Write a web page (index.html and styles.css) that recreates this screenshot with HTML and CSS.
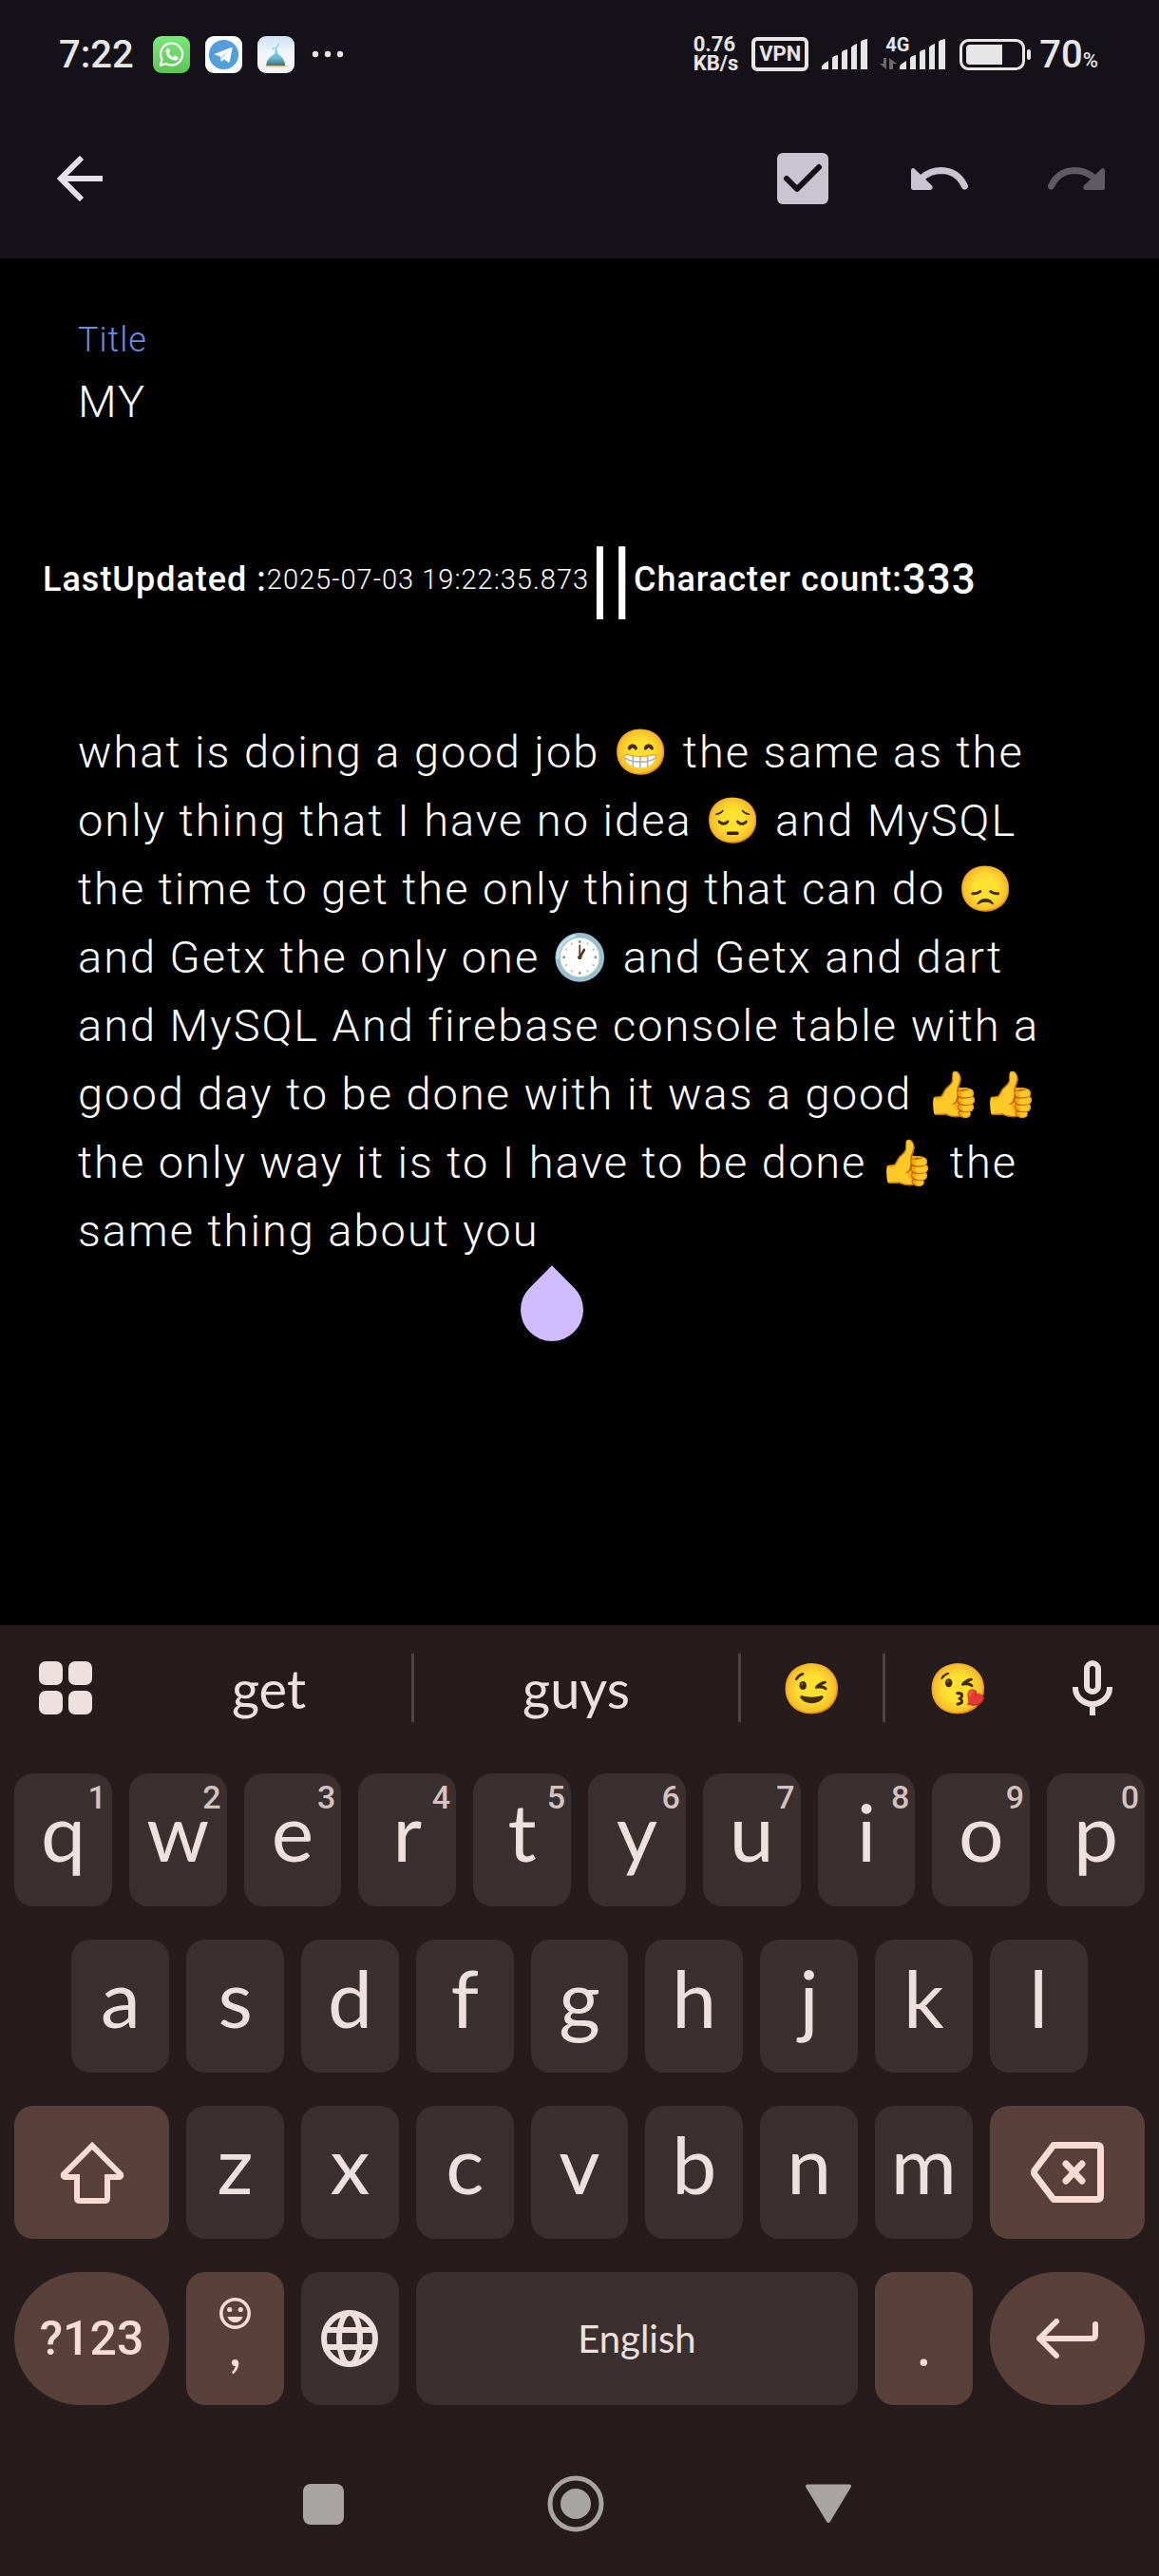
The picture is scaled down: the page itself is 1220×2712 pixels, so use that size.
FILE: index.html
```html
<!DOCTYPE html>
<html lang="en">
<head>
<meta charset="utf-8">
<meta name="viewport" content="width=device-width, initial-scale=1">
<title>Edit note</title>
<link rel="stylesheet" href="styles.css">
</head>
<body>
<div class="screen">
  <header class="top">
    <div class="status">
      <div class="status-group status-left">
        <span class="clock">7:22</span>
        <svg class="app-icon" viewBox="0 0 39 39" aria-label="WhatsApp">
          <defs><linearGradient id="wa" x1="0" y1="0" x2="0" y2="1"><stop offset="0" stop-color="#7ce878"/><stop offset="1" stop-color="#5cc455"/></linearGradient></defs>
          <rect width="39" height="39" rx="9" fill="url(#wa)"/>
          <path d="M7.800 30.800l1.700-6.200a11.500 11.500 0 1 1 4.500 4.500z" fill="none" stroke="#fff" stroke-width="2.200" stroke-linejoin="round"/>
          <path d="M14.800 13.200c.6-.6 1.600-.6 2 .2l1 2.300c.2.500.1.900-.2 1.300l-.9 1.100c1.100 2 2.600 3.300 4.600 4.200l1.200-1.300c.3-.4.700-.5 1.200-.3l2.300 1.100c.6.300.8.800.6 1.500-.5 1.800-2.100 2.500-3.600 2.300-4.900-.7-8.700-4.500-9.400-8.200-.3-1.700.2-3.200 1.200-4.200z" fill="#fff"/>
        </svg>
        <svg class="app-icon" viewBox="0 0 39 39" aria-label="Telegram">
          <rect width="39" height="39" rx="9" fill="#fff"/>
          <circle cx="19.500" cy="19.500" r="15.600" fill="#529fd9"/>
          <path d="M8.800 19.200L27.200 12c.9-.3 1.600.2 1.300 1.500l-2.700 13.200c-.2 1-.8 1.300-1.600.8l-4.300-3.200-2.300 2.200c-.5.500-.9.300-1-.3l-.9-4.700-4.400-1.400c-.9-.3-.9-.7-.5-.9z" fill="#fff"/>
          <path d="M16.400 21.700l8.100-6-6.400 6.900-.5 3.300z" fill="#a9cfeb"/>
        </svg>
        <svg class="app-icon" viewBox="0 0 39 39" aria-label="Prayer times">
          <defs>
            <linearGradient id="sky" x1="0" y1="0" x2="0" y2="1"><stop offset="0" stop-color="#cfe3f5"/><stop offset=".5" stop-color="#f3f6fb"/><stop offset="1" stop-color="#f3f4fa"/></linearGradient>
            <linearGradient id="dome" x1="0" y1="0" x2="0" y2="1"><stop offset="0" stop-color="#6cd2ee"/><stop offset=".55" stop-color="#6bbcd2"/><stop offset="1" stop-color="#3d727c"/></linearGradient>
          </defs>
          <rect width="39" height="39" rx="9" fill="url(#sky)"/>
          <path d="M22 7.500a5 5 0 0 1-6.500 5.300" fill="none" stroke="#8ad6f1" stroke-width="1.500"/>
          <path d="M19.200 13h1l.8 5c1 2 8 4.500 8.200 13H9.200c.2-8.500 8.200-11 9.200-13z" fill="url(#dome)"/>
          <path d="M9 31.800h21" stroke="#f0c25a" stroke-width="1.600"/>
        </svg>
        <svg class="more-dots" viewBox="0 0 34 8" aria-hidden="true"><circle cx="4" cy="4" r="3.200"/><circle cx="17" cy="4" r="3.200"/><circle cx="30" cy="4" r="3.200"/></svg>
      </div>
      <div class="status-group status-right">
        <span class="speed"><span>0.76</span><span>KB/s</span></span>
        <span class="vpn">VPN</span>
        <svg class="signal" viewBox="0 0 49 32" aria-hidden="true"><path d="M0 32v-3q0-2 7-6v9zM11 32V20q1-2 6-3v15zM21 32V14q1-2 6-3v21zM31 32V9q1-2 6-4v27zM41 32V3q1-2 7-3v32z"/></svg>
        <span class="mobile">
          <span class="net">4G</span>
          <svg class="arrows" viewBox="0 0 18 12" aria-hidden="true"><path d="M4 0h3v12L0 6h4zM10 12V0l8 6h-4v6z"/></svg>
          <svg class="signal" viewBox="0 0 49 32" aria-hidden="true"><path d="M0 32v-3q0-2 7-6v9zM11 32V20q1-2 6-3v15zM21 32V14q1-2 6-3v21zM31 32V9q1-2 6-4v27zM41 32V3q1-2 7-3v32z"/></svg>
        </span>
        <svg class="battery" viewBox="0 0 76 33" aria-hidden="true"><rect x="1.500" y="1.500" width="66" height="30" rx="8" fill="none" stroke="#e6e6e6" stroke-width="3"/><path d="M11 6h34v21H11q-4 0-4-4V10q0-4 4-4z"/><rect x="71" y="11" width="4" height="11" rx="2"/></svg>
        <span class="level">70<small>%</small></span>
      </div>
    </div>
    <nav class="appbar">
      <button class="tool" type="button" aria-label="Back"><svg width="48" height="48" viewBox="0 0 48 48"><path d="M26 2L4 24l22 22M4 24h44" fill="none" stroke="#e6e0e9" stroke-width="6"/></svg></button>
      <span class="spacer"></span>
      <button class="tool" type="button" aria-label="Done"><svg width="54" height="54" viewBox="0 0 54 54"><rect width="54" height="54" rx="6" fill="#cac4d0"/><path d="M10 27l11 11 23-23" fill="none" stroke="#141218" stroke-width="6" stroke-linecap="round" stroke-linejoin="round"/></svg></button>
      <button class="tool" type="button" aria-label="Undo"><svg width="60" height="24" viewBox="0 0 60 24"><path d="M0 2.500Q1 0 3.500 1.500L22 19.500q2 4-2 4.500H2.500Q0 24 0 21.500z" fill="#cac4d0"/><path d="M11 11.500Q20 3.500 32 3.500 49 4 56.500 20" fill="none" stroke="#cac4d0" stroke-width="7" stroke-linecap="round"/></svg></button>
      <button class="tool" type="button" aria-label="Redo" disabled><svg width="60" height="24" viewBox="0 0 60 24"><path d="M60 2.500Q59 0 56.500 1.500L38 19.500q-2 4 2 4.500h17.500q2.500 0 2.500-2.500z" fill="#5e5c62"/><path d="M49 11.500Q40 3.500 28 3.500 11 4 3.500 20" fill="none" stroke="#5e5c62" stroke-width="7" stroke-linecap="round"/></svg></button>
    </nav>
  </header>

  <main class="note">
    <div class="field">
      <label for="note-title">Title</label>
      <input id="note-title" type="text" value="MY">
    </div>
    <div class="meta">
      <span class="meta-label">LastUpdated :</span><span class="meta-date">2025-07-03 19:22:35.873</span><span class="meta-bars">||</span><span class="meta-label">Character count:</span><span class="meta-count">333</span>
    </div>
    <div class="body">
      <textarea id="note-body" rows="8" aria-label="Note" spellcheck="false">what is doing a good job 😁 the same as the only thing that I have no idea 😔 and MySQL the time to get the only thing that can do 😞 and Getx the only one 🕐 and Getx and dart and MySQL And firebase console table with a good day to be done with it was a good 👍👍 the only way it is to I have to be done 👍 the same thing about you</textarea>
      <span class="caret-handle"></span>
    </div>
  </main>

  <section class="keyboard" aria-label="Keyboard">
    <div class="strip">
      <button type="button" aria-label="Keyboard menu"><svg width="56" height="56" viewBox="0 0 56 56" fill="#eee0de"><rect width="25" height="25" rx="7"/><rect x="31" width="25" height="25" rx="7"/><rect y="31" width="25" height="25" rx="7"/><rect x="31" y="31" width="25" height="25" rx="7"/></svg></button>
      <button type="button">get</button>
      <button type="button" class="split">guys</button>
      <button type="button" class="split emoji">😉</button>
      <button type="button" class="split emoji">😘</button>
      <button type="button" aria-label="Voice typing"><svg width="42" height="58" viewBox="0 0 42 58" fill="none" stroke="#eee0de" stroke-width="6"><rect x="15" y="3" width="12" height="30" rx="6"/><path d="M3 28v1a18 17 0 0 0 36 0v-1M21 46v12"/></svg></button>
    </div>
    <div class="keys">
      <button type="button" class="key">q<sup>1</sup></button>
      <button type="button" class="key">w<sup>2</sup></button>
      <button type="button" class="key">e<sup>3</sup></button>
      <button type="button" class="key">r<sup>4</sup></button>
      <button type="button" class="key">t<sup>5</sup></button>
      <button type="button" class="key">y<sup>6</sup></button>
      <button type="button" class="key">u<sup>7</sup></button>
      <button type="button" class="key">i<sup>8</sup></button>
      <button type="button" class="key">o<sup>9</sup></button>
      <button type="button" class="key">p<sup>0</sup></button>

      <button type="button" class="key home">a</button>
      <button type="button" class="key">s</button>
      <button type="button" class="key">d</button>
      <button type="button" class="key">f</button>
      <button type="button" class="key">g</button>
      <button type="button" class="key">h</button>
      <button type="button" class="key">j</button>
      <button type="button" class="key">k</button>
      <button type="button" class="key">l</button>

      <button type="button" class="key wide accent first" aria-label="Shift"><svg width="68" height="66" viewBox="0 0 68 66" fill="none" stroke="#fadcd5" stroke-width="6"><path d="M34 5L4 35q-1 3 2 3h12v22q0 3 3 3h26q3 0 3-3V38h12q3 0 2-3z"/></svg></button>
      <button type="button" class="key">z</button>
      <button type="button" class="key">x</button>
      <button type="button" class="key">c</button>
      <button type="button" class="key">v</button>
      <button type="button" class="key">b</button>
      <button type="button" class="key">n</button>
      <button type="button" class="key">m</button>
      <button type="button" class="key wide accent" aria-label="Backspace"><svg width="77" height="64" viewBox="0 0 77 64" fill="none" stroke="#fadcd5" stroke-width="7" stroke-linecap="round" stroke-linejoin="round"><path d="M24 3.500h46q3.500 0 3.500 3.500v50q0 3.500-3.500 3.500H24L4 34q-1-2 0-4zM37 23l17 18M54 23L37 41"/></svg></button>

      <button type="button" class="key wide accent round symbols">?123</button>
      <button type="button" class="key accent punct"><svg width="33" height="33" viewBox="0 0 33 33" aria-hidden="true"><circle cx="16.500" cy="16.500" r="14.700" fill="none" stroke="#fadcd5" stroke-width="3.500"/><circle cx="10.700" cy="12.500" r="2.600" fill="#fadcd5"/><circle cx="22.300" cy="12.500" r="2.600" fill="#fadcd5"/><path d="M8.500 20h16c-1 3.600-4 6-8 6s-7-2.400-8-6z" fill="#fadcd5"/></svg><span>,</span></button>
      <button type="button" class="key" aria-label="Switch language"><svg width="60" height="60" viewBox="0 0 60 60" fill="none" stroke="#eee0de" stroke-width="6"><circle cx="30" cy="30" r="27"/><ellipse cx="30" cy="30" rx="11" ry="27"/><path d="M5 21h50M5 39h50"/></svg></button>
      <button type="button" class="key space">English</button>
      <button type="button" class="key accent punct"><span>.</span></button>
      <button type="button" class="key wide accent round" aria-label="Enter"><svg width="65" height="42" viewBox="0 0 65 42" fill="none" stroke="#fadcd5" stroke-width="6" stroke-linecap="round" stroke-linejoin="round"><path d="M21 3L3 21l18 18M3 21h55q4 0 4-4V6"/></svg></button>
    </div>
  </section>

  <nav class="sysnav">
    <button type="button" aria-label="Recent apps"><svg width="43" height="43" viewBox="0 0 43 43"><rect width="43" height="43" rx="8" fill="#a8a4a3"/></svg></button>
    <button type="button" aria-label="Home"><svg width="60" height="60" viewBox="0 0 60 60"><circle cx="30" cy="30" r="27" fill="none" stroke="#a8a4a3" stroke-width="5"/><circle cx="30" cy="30" r="16" fill="#a8a4a3"/></svg></button>
    <button type="button" aria-label="Hide keyboard"><svg width="50" height="42" viewBox="0 0 50 42"><path d="M3 2.500h44L25 39z" fill="#a8a4a3" stroke="#a8a4a3" stroke-width="4" stroke-linejoin="round"/></svg></button>
  </nav>
</div>
</body>
</html>
```
FILE: styles.css
```css
* { box-sizing: border-box; }

body {
  margin: 0;
  background: #000;
  color: #fff;
  font-family: Roboto, "Noto Color Emoji", sans-serif;
}

button, input, textarea {
  margin: 0;
  padding: 0;
  border: 0;
  background: none;
  color: inherit;
  font: inherit;
}

svg { display: block; flex: none; }

.screen {
  display: flex;
  flex-direction: column;
  min-height: 100vh;
}

/* Status bar and app bar */
.top { background: #141218; }

.status {
  display: flex;
  justify-content: space-between;
  align-items: center;
  height: 104px;
  padding: 10px 64px 0 62px;
  color: #e6e6e6;
  fill: #e6e6e6;
}

.status-group { display: flex; align-items: center; }
.status-left { gap: 16px; }
.status-right { gap: 14px; }

.clock, .level {
  padding-top: 2px;
  font-size: 40px;
  font-weight: 500;
  line-height: 48px;
}

.clock { margin-right: 4px; }
.level { margin-left: -6px; }
.level small { font-size: 22px; line-height: 24px; }

.app-icon { width: 39px; height: 39px; }
.more-dots { width: 34px; height: 8px; margin-left: 2px; }

.speed {
  display: flex;
  flex-direction: column;
  font-size: 22px;
  font-weight: 700;
  line-height: 20px;
}

.vpn {
  padding: 0 4px;
  border: 4px solid #e6e6e6;
  border-radius: 6px;
  font-size: 22px;
  font-weight: 700;
  line-height: 28px;
}

.signal { width: 49px; height: 32px; }

.mobile { position: relative; padding-left: 19px; }

.net {
  position: absolute;
  top: -6px;
  left: 4px;
  font-size: 20px;
  font-weight: 700;
  line-height: 24px;
}

.arrows {
  position: absolute;
  bottom: 0;
  left: -2px;
  width: 18px;
  height: 12px;
  fill: #6b696e;
}

.battery { width: 76px; height: 33px; }

.appbar {
  display: flex;
  align-items: center;
  height: 168px;
  padding: 0 15px 0 12px;
}

.tool {
  display: flex;
  justify-content: center;
  align-items: center;
  width: 144px;
  height: 144px;
}

.spacer { flex: 1; }

/* Note */
.note { flex: 1; }

.field {
  display: flex;
  flex-direction: column;
  gap: 8px;
  padding: 62px 82px 0;
}

.field label {
  color: #6590e8;
  font-size: 36px;
  font-weight: 300;
  line-height: 48px;
  letter-spacing: 1px;
}

.field input {
  width: 100%;
  height: 64px;
  outline: 0;
  font-size: 47px;
  font-weight: 300;
  letter-spacing: 2px;
}

.meta {
  display: flex;
  align-items: center;
  height: 100px;
  margin-top: 106px;
  padding-left: 45px;
  white-space: nowrap;
  letter-spacing: 1px;
}

.meta-label { font-size: 36px; font-weight: 500; }
.meta-date { font-size: 29px; font-weight: 300; }
.meta-bars { font-size: 90px; font-weight: 500; line-height: 100px; }
.meta-count { font-size: 44px; font-weight: 500; }

.body {
  position: relative;
  padding: 96px 82px 0;
}

.body textarea {
  display: block;
  width: 100%;
  outline: 0;
  resize: none;
  overflow: hidden;
  font-size: 47px;
  font-weight: 300;
  line-height: 72px;
  letter-spacing: 2px;
}

.caret-handle {
  position: absolute;
  top: 100%;
  left: 548px;
  width: 66px;
  height: 66px;
  margin-top: 14px;
  border-radius: 0 50% 50% 50%;
  background: #cfbcff;
  transform: rotate(45deg);
}

/* Keyboard */
.keyboard {
  background: #251c1b;
  color: #eee0de;
  font-family: Lato, "Noto Color Emoji", sans-serif;
}

.strip {
  display: grid;
  grid-template-columns: 128fr 300fr 344fr 152fr 156fr 129fr;
  align-items: start;
  height: 156px;
  padding: 30px 6px 0 5px;
}

.strip button {
  display: flex;
  justify-content: center;
  align-items: center;
  height: 72px;
  font-size: 56px;
}

.strip .split { border-left: 3px solid #4d4443; }
.strip .emoji { font-size: 52px; }

.keys {
  display: grid;
  grid-template-columns: repeat(20, 1fr);
  grid-auto-rows: 140px;
  gap: 35px 18px;
  padding: 0 15px;
}

.key {
  position: relative;
  display: flex;
  justify-content: center;
  align-items: center;
  grid-column: span 2;
  min-width: 0;
  border-radius: 20px;
  background: #3a302f;
  font-size: 84px;
  line-height: 100px;
  padding-bottom: 18px;
}

.key sup {
  position: absolute;
  top: 5px;
  right: 6px;
  color: #d4c3c0;
  font: 500 34px/40px Roboto, sans-serif;
}

.key:has(svg), .symbols, .space { padding-bottom: 0; }
.home { grid-column: 2 / span 2; }
.wide { grid-column: span 3; }
.first { grid-column: 1 / span 3; }
.accent { background: #5a403b; color: #fadcd5; }
.round { border-radius: 70px; }
.symbols { font: 500 50px/60px Roboto, sans-serif; }
.space { grid-column: span 8; font-size: 40px; }

.punct, .punct:has(svg) {
  flex-direction: column;
  justify-content: flex-end;
  padding-bottom: 48px;
}

.punct span { font-size: 60px; line-height: 32px; }

.sysnav {
  display: flex;
  justify-content: center;
  height: 180px;
  padding: 28px 8px 0 0;
  background: #251c1b;
}

.sysnav button {
  display: flex;
  justify-content: center;
  align-items: center;
  width: 266px;
  height: 152px;
}
```
